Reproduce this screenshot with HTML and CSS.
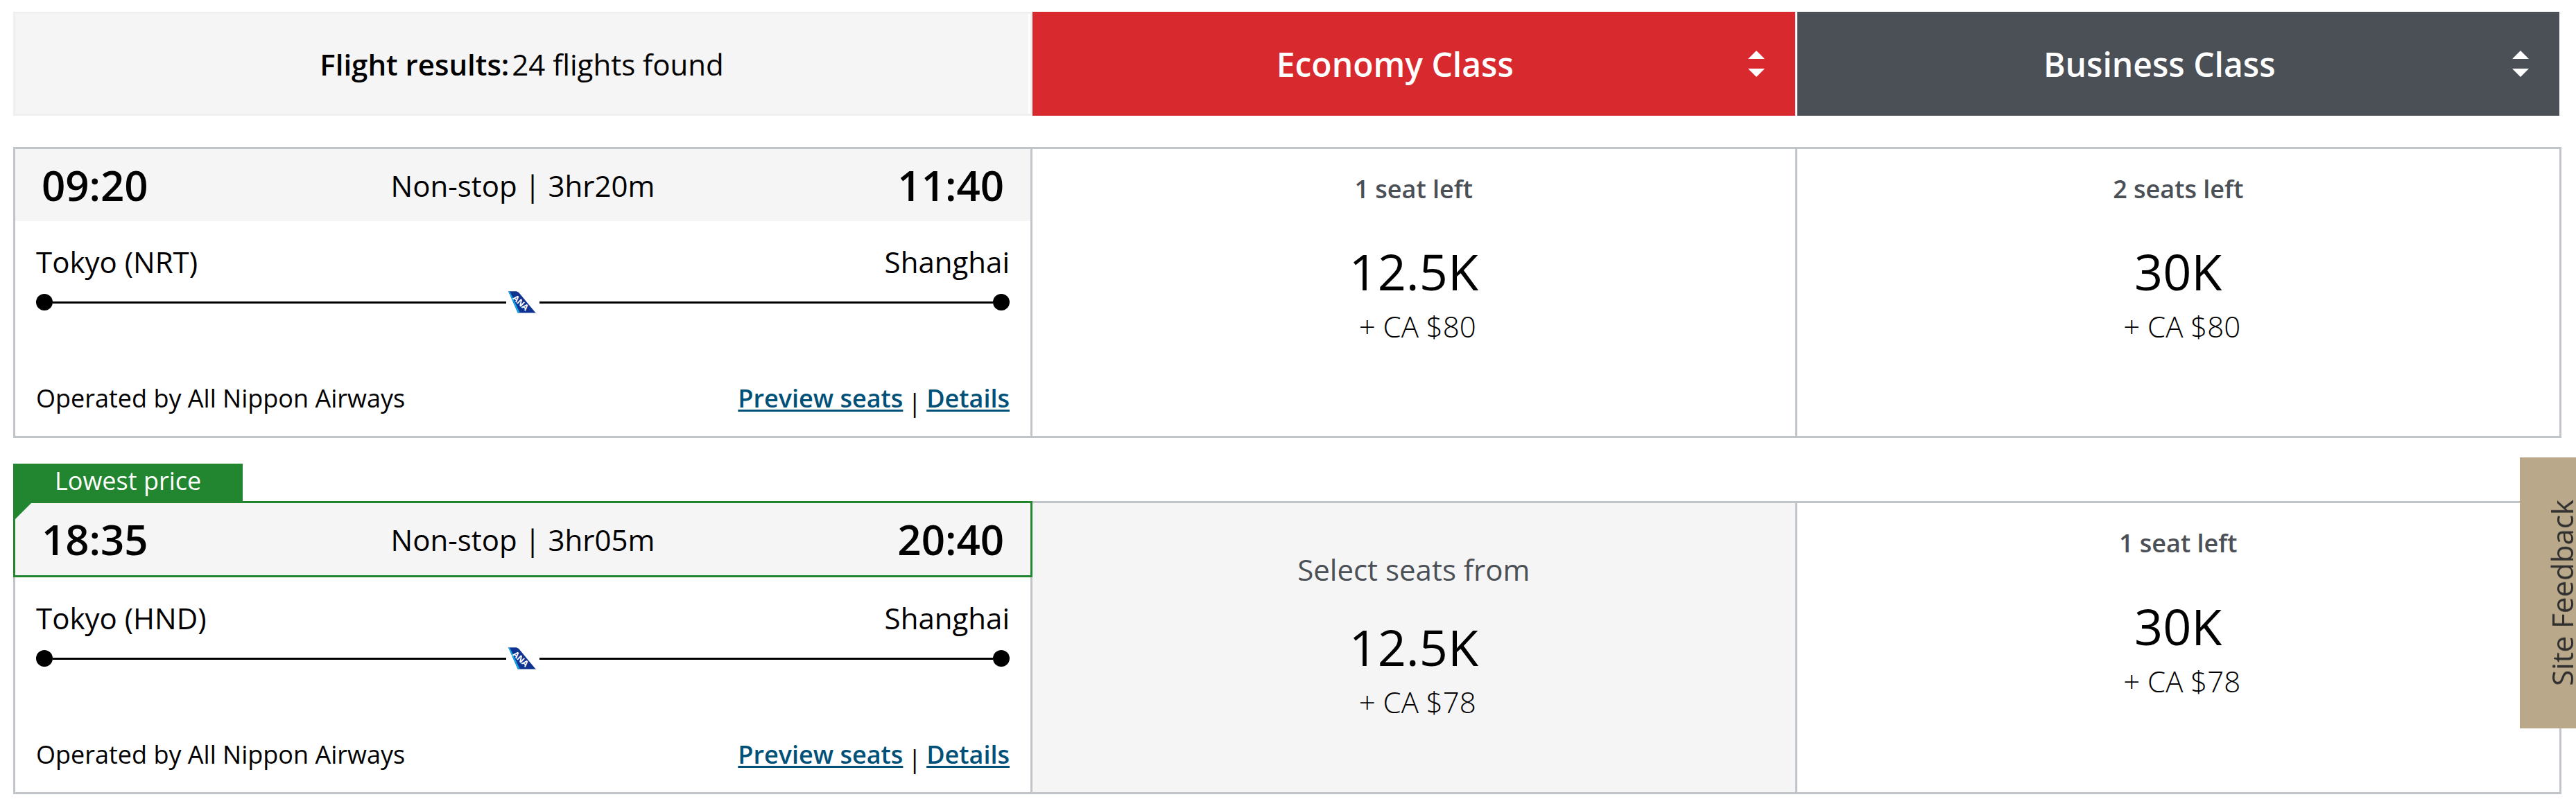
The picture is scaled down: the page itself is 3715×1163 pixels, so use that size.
FILE: index.html
```html
<!DOCTYPE html>
<html lang="en">
<head>
    <meta charset="UTF-8">
    <title>Flight results</title>
    <link rel="stylesheet" href="styles.css">
</head>
<body>
<svg class="defs" width="0" height="0" aria-hidden="true">
    <symbol id="tail" viewBox="0 0 40 32">
        <path d="M0 0h11q3 1 5 3l24 29H14Z" fill="#0f3391"/>
        <path d="M0 0h2l15 32h-3Z" fill="#12a5e6"/>
        <path d="M0 0h11M14 31.500h26" stroke="#8b9dcc" fill="none"/>
        <text class="ana" x="0" y="0" transform="translate(15 20) rotate(43)" text-anchor="middle">ANA</text>
    </symbol>
    <symbol id="sort" viewBox="0 0 24 38">
        <path d="M12 0l12 12H0ZM0 26h24L12 38Z" fill="#fff"/>
    </symbol>
</svg>
<main id="results">
    <div class="columns head">
        <div class="count"><strong>Flight results:</strong><span>24 flights found</span></div>
        <button type="button" class="cabin economy">
            <span>Economy Class</span>
            <svg class="sort" aria-hidden="true"><use href="#sort"/></svg>
        </button>
        <button type="button" class="cabin business">
            <span>Business Class</span>
            <svg class="sort" aria-hidden="true"><use href="#sort"/></svg>
        </button>
    </div>

    <section class="flight">
        <div class="columns">
            <div class="info">
                <div class="times">
                    <span class="time">09:20</span>
                    <span>Non-stop | 3hr20m</span>
                    <span class="time">11:40</span>
                </div>
                <div class="route">
                    <div class="cities"><span>Tokyo (NRT)</span><span>Shanghai</span></div>
                    <div class="track">
                        <i class="dot"></i><i class="line"></i>
                        <svg class="tail" aria-hidden="true"><use href="#tail"/></svg>
                        <i class="line"></i><i class="dot"></i>
                    </div>
                    <div class="operated">
                        <span>Operated by All Nippon Airways</span>
                        <div class="links">
                            <a href="#">Preview seats</a><span class="sep">|</span><a href="#">Details</a>
                        </div>
                    </div>
                </div>
            </div>
            <div class="fare">
                <div class="left">1 seat left</div>
                <div class="price"><div class="points">12.5K</div><div class="cash">+ CA $80</div></div>
            </div>
            <div class="fare">
                <div class="left">2 seats left</div>
                <div class="price"><div class="points">30K</div><div class="cash">+ CA $80</div></div>
            </div>
        </div>
    </section>

    <section class="flight lowest">
        <div class="tag">Lowest price</div>
        <div class="columns">
            <div class="info">
                <div class="times">
                    <span class="time">18:35</span>
                    <span>Non-stop | 3hr05m</span>
                    <span class="time">20:40</span>
                </div>
                <div class="route">
                    <div class="cities"><span>Tokyo (HND)</span><span>Shanghai</span></div>
                    <div class="track">
                        <i class="dot"></i><i class="line"></i>
                        <svg class="tail" aria-hidden="true"><use href="#tail"/></svg>
                        <i class="line"></i><i class="dot"></i>
                    </div>
                    <div class="operated">
                        <span>Operated by All Nippon Airways</span>
                        <div class="links">
                            <a href="#">Preview seats</a><span class="sep">|</span><a href="#">Details</a>
                        </div>
                    </div>
                </div>
            </div>
            <div class="fare select">
                <div class="from">Select seats from</div>
                <div class="price"><div class="points">12.5K</div><div class="cash">+ CA $78</div></div>
            </div>
            <div class="fare">
                <div class="left">1 seat left</div>
                <div class="price"><div class="points">30K</div><div class="cash">+ CA $78</div></div>
            </div>
        </div>
    </section>
</main>
<button type="button" id="feedback">Site Feedback</button>
</body>
</html>
```
FILE: styles.css
```css
*{
    margin: 0;
    padding: 0;
    box-sizing: border-box;
}
body{
    font: 42px/63px "Open Sans", sans-serif;
    color: #000;
    background: #fff;
}
button{
    border: 0;
    font: inherit;
    cursor: pointer;
}
.defs{
    position: absolute;
}
#results{
    padding: 17px 21px 17px 19px;
}
.columns{
    display: grid;
    grid-template-columns: 4fr 3fr 3fr;
}

/* header */
.head{
    height: 150px;
    margin-bottom: 45px;
}
.count{
    display: flex;
    align-items: center;
    justify-content: center;
    gap: 4px;
    background: #f5f5f5;
    border: 3px solid #efefef;
    box-shadow: inset -3px 0 #fff;
    padding-right: 3px;
}
.count strong{
    font-weight: 600;
}
.cabin{
    display: flex;
    align-items: center;
    gap: 30px;
    padding: 0 44px;
    margin-right: 3px;
    color: #fff;
    font-size: 48px;
    font-weight: 600;
}
.cabin span{
    flex: 1;
    text-align: center;
}
.economy{
    background: #d8292f;
}
.business{
    background: #4b4f56;
}
.sort{
    width: 24px;
    height: 38px;
}

/* flight rows */
.flight{
    margin-bottom: 37px;
}
.flight:last-child{
    margin-bottom: 0;
}
.info,
.fare{
    border: 3px solid #c1c4c8;
}
.times{
    display: grid;
    grid-template-columns: 1fr auto 1fr;
    align-items: center;
    height: 104px;
    padding: 0 38px;
    background: #f5f5f5;
}
.time{
    font-size: 60px;
    font-weight: 600;
}
.time:last-child{
    text-align: right;
}
.route{
    padding: 27px 30px 15px;
}
.cities,
.operated{
    display: flex;
    justify-content: space-between;
}
.track{
    display: flex;
    align-items: center;
    height: 24px;
    margin: 15px 0 100px;
}
.dot{
    width: 24px;
    height: 24px;
    border-radius: 50%;
    background: #000;
}
.line{
    flex: 1;
    height: 3px;
    background: #000;
}
.tail{
    width: 40px;
    height: 32px;
    margin: 0 5px 0 3px;
}
.ana{
    font-size: 12px;
    font-weight: 700;
    fill: #fff;
}
.operated{
    font-size: 36px;
    line-height: 54px;
}
.links{
    display: flex;
    gap: 7px;
}
.links a{
    color: #005078;
    font-weight: 600;
    text-decoration-thickness: 3px;
    text-underline-offset: 3px;
}
.sep{
    line-height: 66px;
}

/* fares */
.fare{
    display: grid;
    grid-template-rows: 1fr auto 1fr;
    border-left: 0;
    text-align: center;
}
.left{
    padding-top: 31px;
    color: #4b4f56;
    font-size: 36px;
    font-weight: 600;
    line-height: 54px;
}
.price{
    grid-row: 2;
}
.points{
    font-size: 72px;
    line-height: 96px;
}
.cash{
    padding-left: 11px;
    font-weight: 300;
}
.select{
    display: flex;
    flex-direction: column;
    justify-content: center;
    gap: 32px;
    padding-bottom: 36px;
    background: #f5f5f5;
}
.from{
    color: #4b4f56;
}

/* lowest price */
.tag{
    width: fit-content;
    padding: 0 60px 4px;
    background: #22852f;
    color: #fff;
    font-size: 36px;
    line-height: 50px;
}
.lowest .times{
    position: relative;
    height: 110px;
    margin: -3px -3px 0;
    border: 3px solid #22852f;
}
.lowest .times:before{
    content: "";
    position: absolute;
    top: 0;
    left: 0;
    border-top: 23px solid #22852f;
    border-right: 23px solid transparent;
}

#feedback{
    position: fixed;
    top: 660px;
    right: 0;
    padding: 61px 40px 61px 0;
    background: #b9a88a;
    color: #2f2f2f;
    line-height: 41px;
    writing-mode: vertical-rl;
    transform: rotate(180deg);
}
```
